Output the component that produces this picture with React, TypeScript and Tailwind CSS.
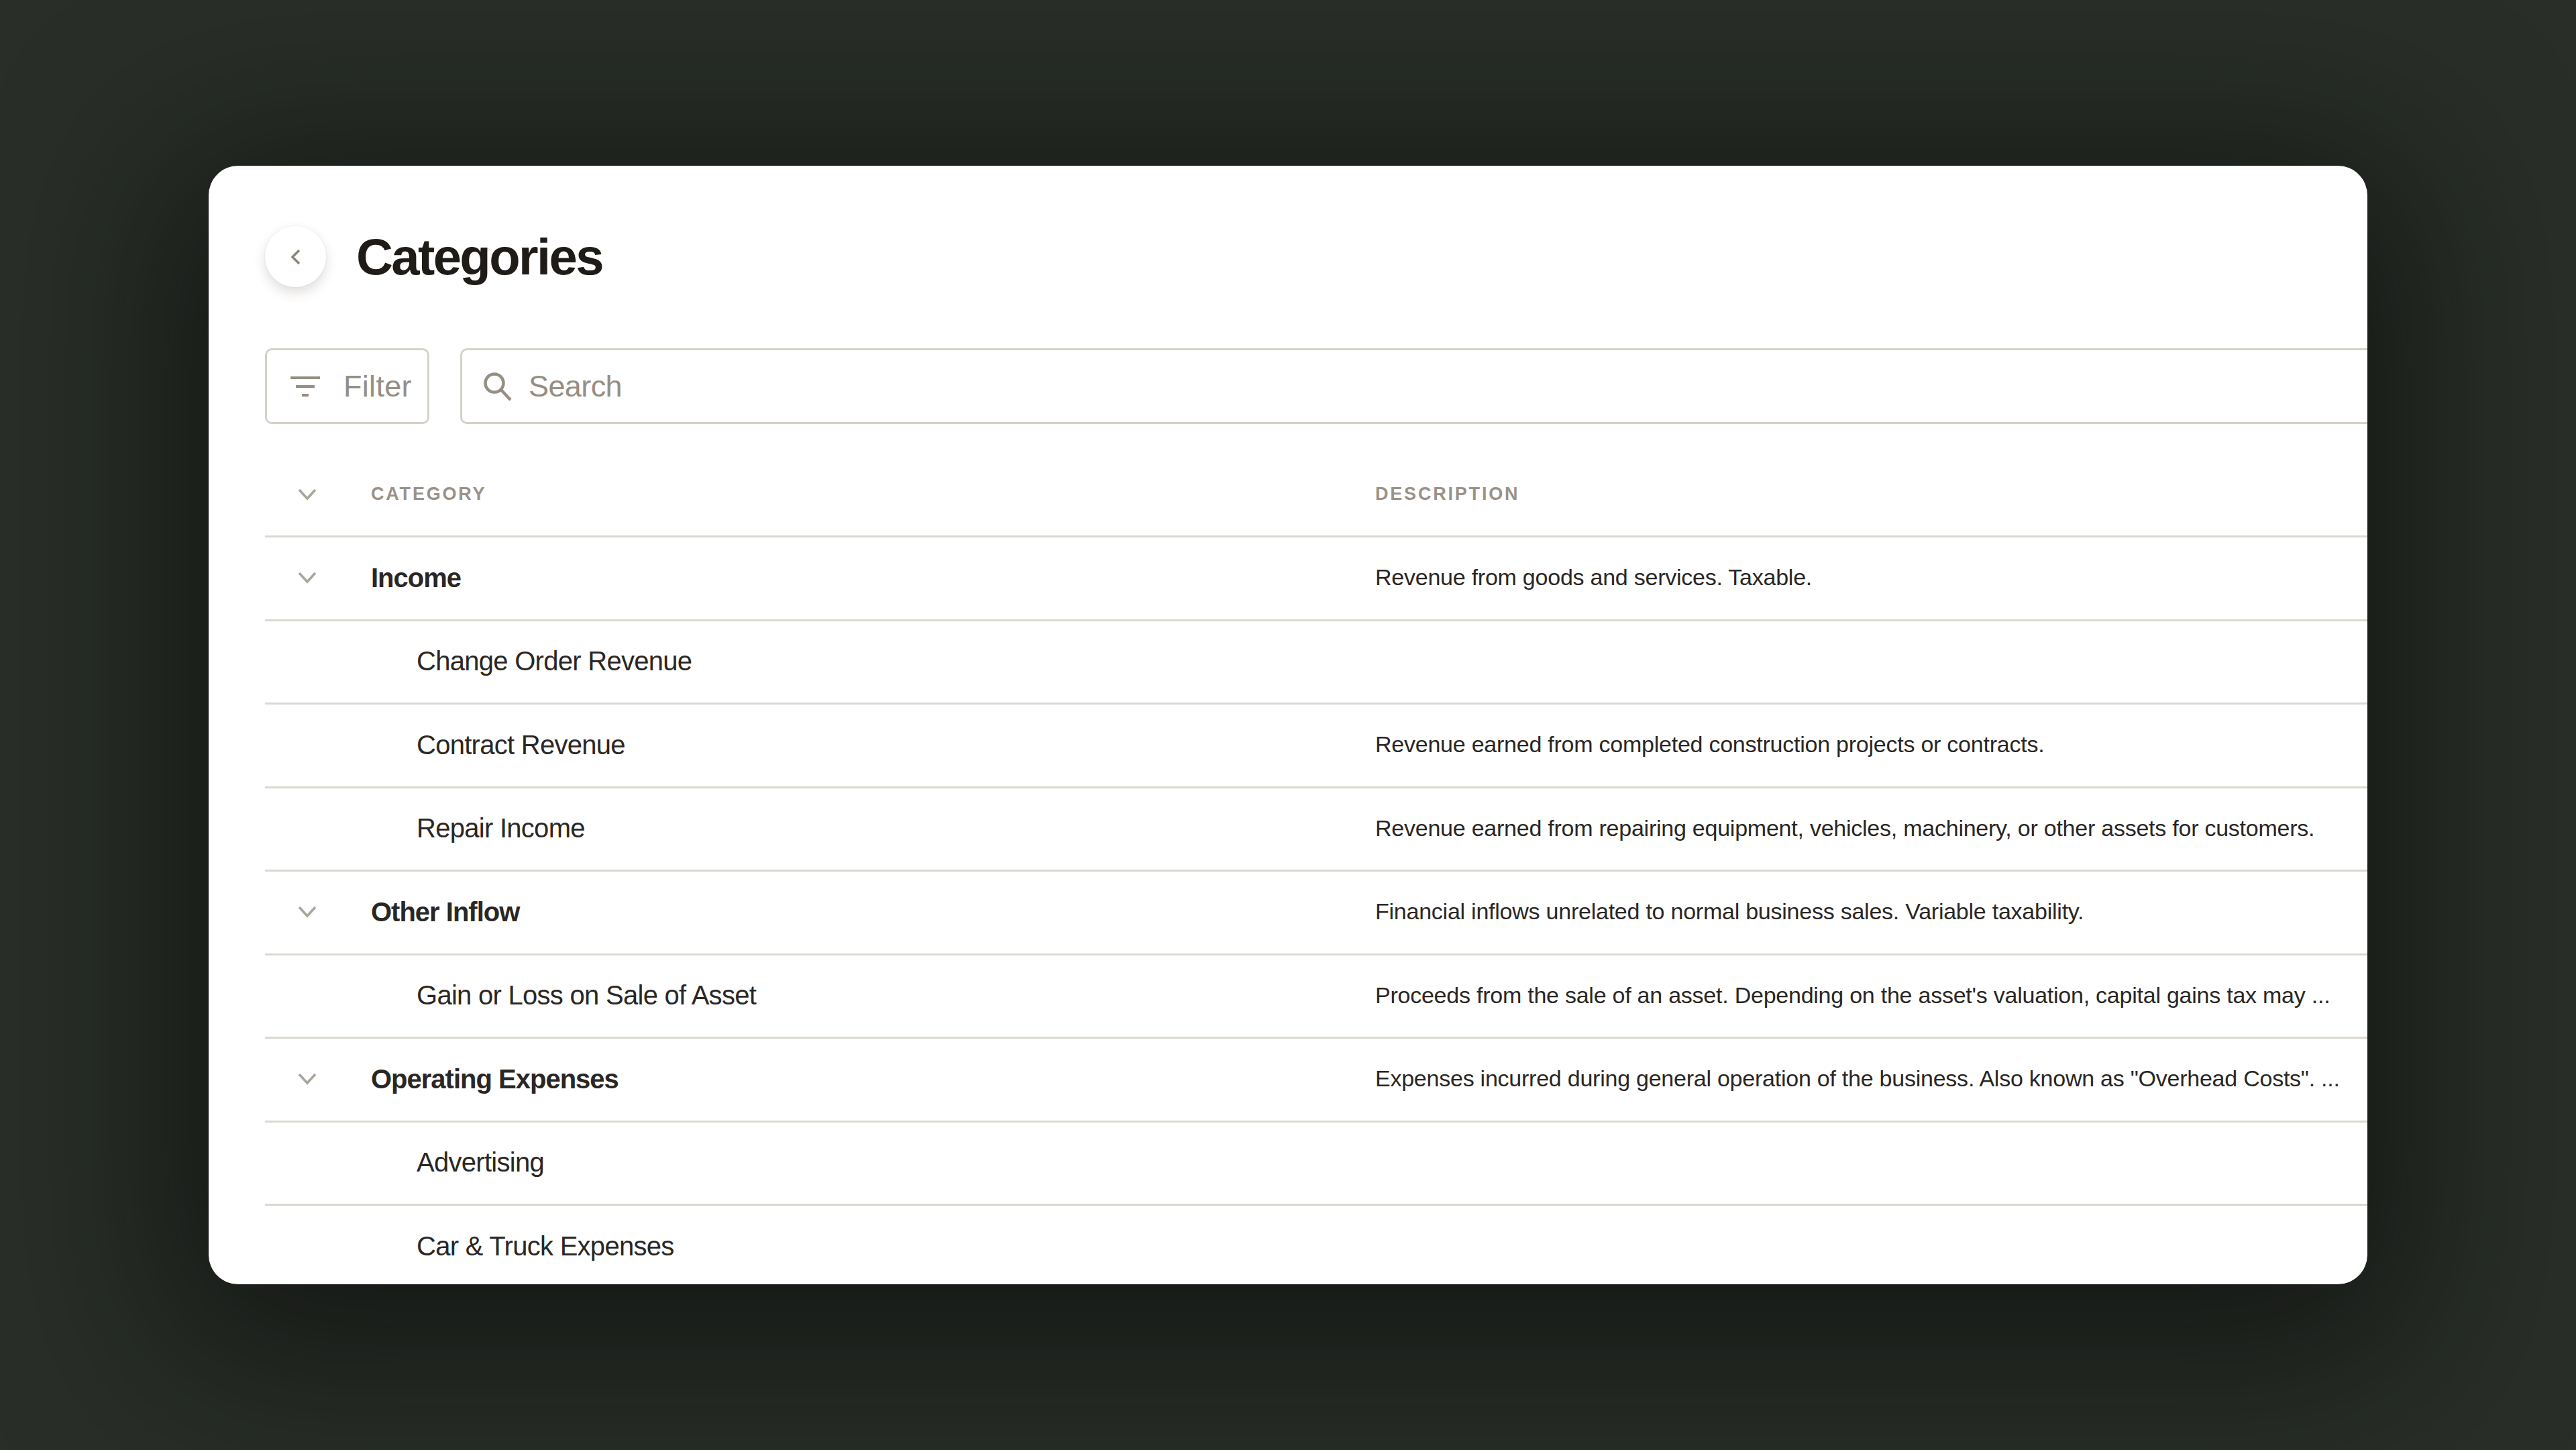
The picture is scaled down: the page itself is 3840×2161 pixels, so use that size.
import React from 'react';

interface Row {
  name: string;
  description?: string;
  group?: boolean;
}

const rows: Row[] = [
  { name: 'Income', description: 'Revenue from goods and services. Taxable.', group: true },
  { name: 'Change Order Revenue' },
  { name: 'Contract Revenue', description: 'Revenue earned from completed construction projects or contracts.' },
  { name: 'Repair Income', description: 'Revenue earned from repairing equipment, vehicles, machinery, or other assets for customers.' },
  { name: 'Other Inflow', description: 'Financial inflows unrelated to normal business sales. Variable taxability.', group: true },
  { name: 'Gain or Loss on Sale of Asset', description: "Proceeds from the sale of an asset. Depending on the asset's valuation, capital gains tax may ..." },
  { name: 'Operating Expenses', description: 'Expenses incurred during general operation of the business. Also known as "Overhead Costs". ...', group: true },
  { name: 'Advertising' },
  { name: 'Car & Truck Expenses' },
];

const ChevronDown = () => (
  <svg width="28" height="18" viewBox="0 0 28 18" fill="none" stroke="#aaa59b" strokeWidth="3.6">
    <path d="M2 2l12 13L26 2" />
  </svg>
);

const App: React.FC = () => {
  return (
    <div className="h-[2161px] w-[3840px] flex items-center justify-center bg-[#292e28] font-['Liberation_Sans',sans-serif]">
      <div className="w-[3218px] h-[1667px] bg-white rounded-[44px] overflow-hidden pl-[84px] pt-[90px] shadow-[0_50px_280px_60px_rgba(10,11,9,0.62)]">
        {/* --- Title --- */}
        <div className="flex items-center h-[91px]">
          <button className="w-[91px] h-[91px] rounded-full bg-white flex items-center justify-center shadow-[0_8px_18px_rgba(60,50,40,0.16),0_0_3px_rgba(60,50,40,0.08)]">
            <svg width="18" height="26" viewBox="0 0 18 26" fill="none" stroke="#8a8379" strokeWidth="3.4">
              <path d="M14 3L4 13l10 10" />
            </svg>
          </button>
          <h1 className="ml-[45px] text-[76px] font-bold tracking-[-2.6px] text-[#1f1b17] leading-none">Categories</h1>
        </div>

        {/* --- Filter and search --- */}
        <div className="flex mt-[91px] h-[113px] gap-[46px] text-[45px] text-[#968e84]">
          <div className="w-[245px] shrink-0 flex items-center border-[3px] border-[#d6d1c9] rounded-[10px] pl-[35px]">
            <svg width="44" height="30" viewBox="0 0 44 30" fill="#968e84">
              <rect x="0" y="0" width="44" height="4" />
              <rect x="8" y="13" width="28" height="4" />
              <rect x="17" y="26" width="10" height="4" />
            </svg>
            <span className="ml-[35px] tracking-[0.3px]">Filter</span>
          </div>
          <div className="flex-1 -mr-[20px] flex items-center border-[3px] border-[#d6d1c9] rounded-[10px] pl-[31px]">
            <svg width="44" height="44" viewBox="0 0 44 44" fill="none" stroke="#968e84" strokeWidth="4.5">
              <circle cx="17" cy="17" r="13.5" />
              <path d="M27 27l14 15" />
            </svg>
            <span className="ml-[24px] tracking-[-0.6px]">Search</span>
          </div>
        </div>

        {/* --- Table --- */}
        <div className="mt-[43px] h-[126px] flex items-center border-b-[3px] border-[#dcd8d1] text-[27px] font-bold tracking-[2.8px] text-[#9a9288]">
          <div className="w-[158px] shrink-0 pl-[49px] flex">
            <ChevronDown />
          </div>
          <div className="w-[1497px] shrink-0">CATEGORY</div>
          <div>DESCRIPTION</div>
        </div>
        {rows.map(row => (
          <div key={row.name} className="h-[124.5px] shrink-0 flex items-center pb-[2px] border-b-[3px] border-[#dcd8d1] text-[#2a2724]">
            <div className="w-[158px] shrink-0 pl-[49px] flex">
              {row.group && <ChevronDown />}
            </div>
            <div className={`w-[1497px] shrink-0 text-[40px] ${row.group ? 'font-bold tracking-[-1px]' : 'pl-[68px] tracking-[-0.72px]'}`}>
              {row.name}
            </div>
            <div className="text-[34px] tracking-[-0.24px] whitespace-nowrap">{row.description}</div>
          </div>
        ))}
      </div>
    </div>
  );
};

export default App;
